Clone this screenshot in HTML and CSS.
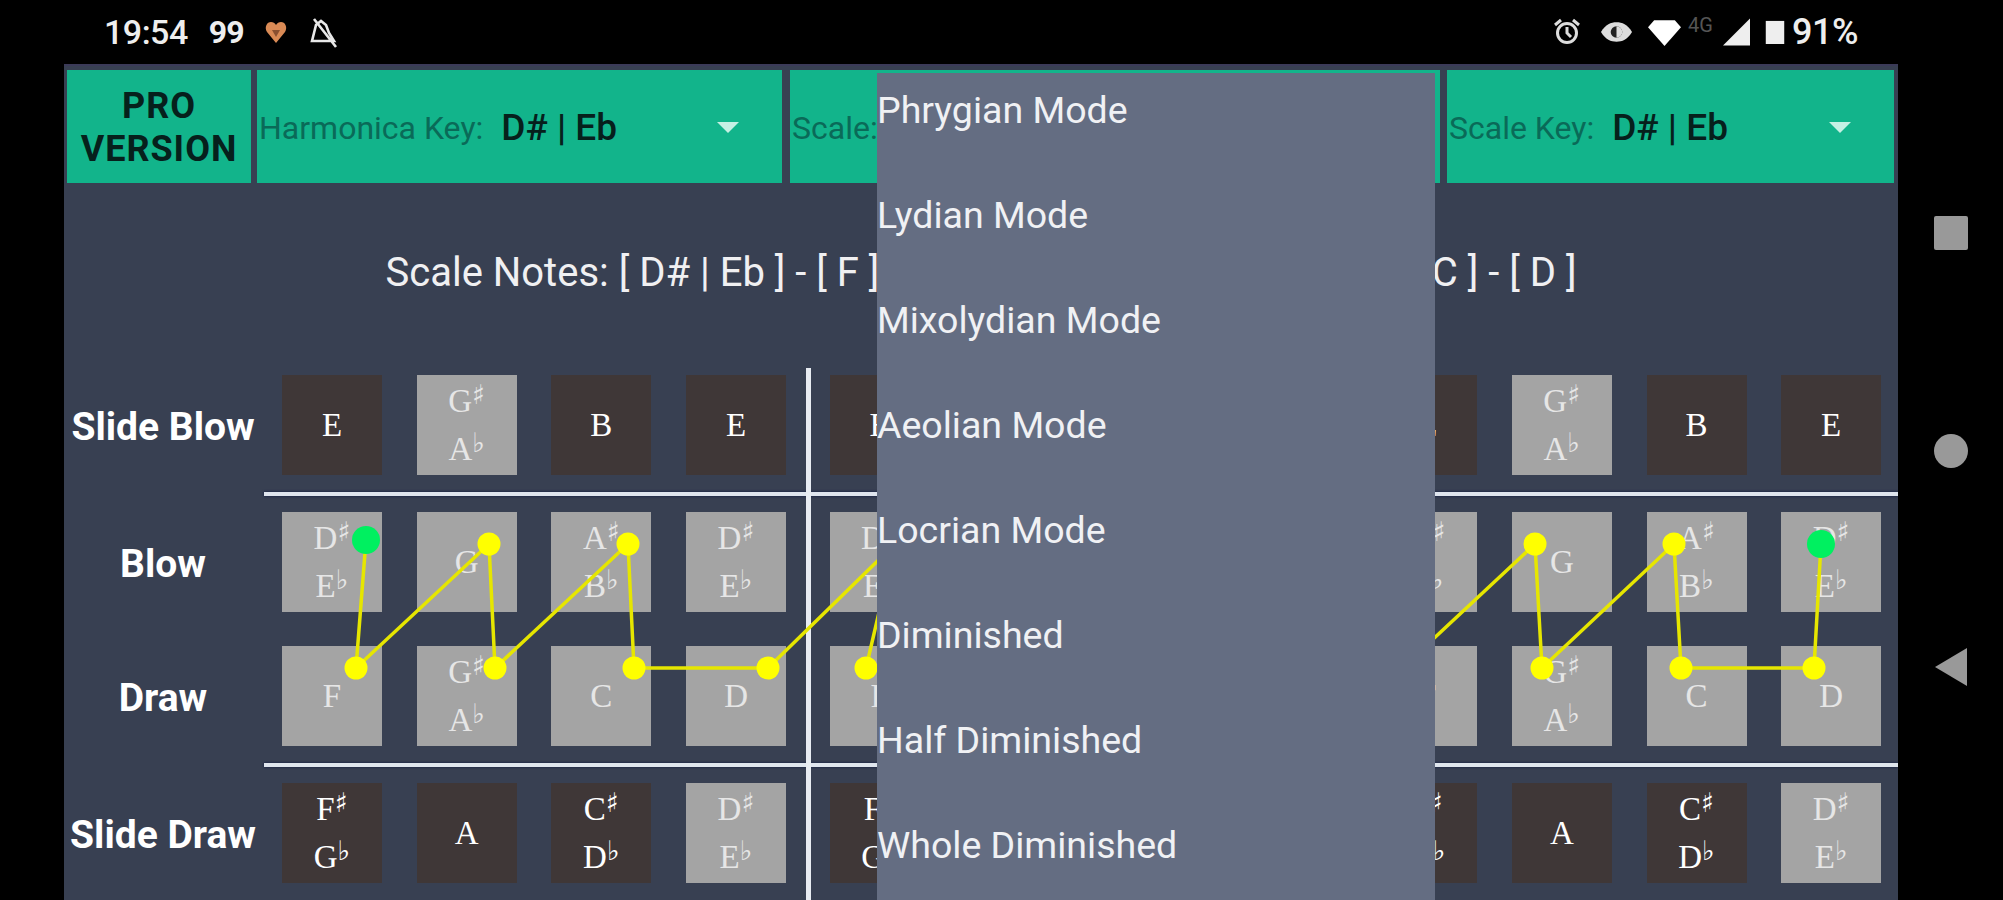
FILE: index.html
```html
<!DOCTYPE html>
<html lang="en">
<head>
    <meta charset="UTF-8">
    <title>Harmonica Scales</title>
    <link rel="stylesheet" href="styles.css">
</head>
<body>
    <div class="page">
        <div class="status-bar">
            <div class="status-left">
                <span class="clock">19:54</span>
                <span class="badge-99">99</span>
                <svg class="ic-heart" viewBox="0 0 24 24"><path d="M12 23 3 12C0 7 3 2 7 2c2 0 4 1 5 3 1-2 3-3 5-3 4 0 7 5 4 10z" fill="#d98a55"/><path d="M12 17 8 10h8z" fill="#8a5030"/></svg>
                <svg class="ic-mute" viewBox="0 0 33 32"><path d="M4 25h22l-5-8-3-8-5-4-5 4-2 8zM6 3l22 28" fill="none" stroke="#e8e8e8" stroke-width="2.6"/></svg>
            </div>
            <div class="status-right">
                <svg class="ic-alarm" viewBox="0 0 30 30"><circle cx="15" cy="16" r="9.5" fill="none" stroke="#ddd" stroke-width="3"/><path d="M15 10v6l4 4M3 8l6-5M27 8l-6-5" fill="none" stroke="#ddd" stroke-width="3"/></svg>
                <svg class="ic-eye" viewBox="0 0 34 24"><path d="M1 12C6 4 11 2 17 2s11 2 16 10c-5 8-10 10-16 10S6 20 1 12z" fill="#ddd"/><circle cx="17" cy="12" r="6" fill="#222"/><path d="M17 6a6 6 0 0 1 0 12z" fill="#ddd"/></svg>
                <svg class="ic-wifi" viewBox="0 0 32 26"><path d="M16 26 0 8 6 1h20l6 7z" fill="#fff"/></svg>
                <span class="net-type">4G</span>
                <svg class="ic-signal" viewBox="0 0 28 28"><path d="M28 0v28H0z" fill="#eee"/></svg>
                <svg class="ic-battery" viewBox="0 0 20 26"><rect x="0" y="1" width="20" height="25" fill="#eee"/></svg>
                <span class="battery-level">91%</span>
            </div>
        </div>

        <div class="main">
            <div class="app">
                <div class="toolbar">
                    <button class="pro-btn">PRO<br>VERSION</button>
                    <div class="picker picker-harp">
                        <span class="picker-label">Harmonica Key:</span>
                        <span class="picker-value">D# | Eb</span>
                        <span class="picker-arrow"></span>
                    </div>
                    <div class="picker picker-scale">
                        <span class="picker-label">Scale:</span>
                        <span class="picker-arrow"></span>
                    </div>
                    <div class="picker picker-key">
                        <span class="picker-label">Scale Key:</span>
                        <span class="picker-value">D# | Eb</span>
                        <span class="picker-arrow"></span>
                    </div>
                </div>

                <div class="scale-notes">Scale Notes: [ D# | Eb ] - [ F ] - [ G ] - [ G# | Ab ] - [ A# | Bb ] - [ C ] - [ D ]</div>

                <div class="board">
                    <div class="divider divider-a"></div>

                    <div class="row">
                        <div class="row-label">Slide Blow</div>
                        <div class="cells">
                            <div class="group">
                                <div class="cell dark">E</div>
                                <div class="cell on"><div>G<span class="acc">♯</span></div><div>A<span class="acc">♭</span></div></div>
                                <div class="cell dark">B</div>
                                <div class="cell dark">E</div>
                            </div>
                            <!-- the rest of this group sits under the open menu -->
                            <div class="group">
                                <div class="cell dark">E</div>
                                <div class="cell on"></div>
                                <div class="cell dark"></div>
                                <div class="cell dark"></div>
                            </div>
                            <div class="group">
                                <div class="cell dark">E</div>
                                <div class="cell on"><div>G<span class="acc">♯</span></div><div>A<span class="acc">♭</span></div></div>
                                <div class="cell dark">B</div>
                                <div class="cell dark">E</div>
                            </div>
                        </div>
                    </div>

                    <div class="rule"></div>

                    <div class="row row-blow">
                        <div class="row-label">Blow</div>
                        <div class="cells">
                            <div class="group">
                                <div class="cell on"><div>D<span class="acc">♯</span></div><div>E<span class="acc">♭</span></div></div>
                                <div class="cell on">G</div>
                                <div class="cell on"><div>A<span class="acc">♯</span></div><div>B<span class="acc">♭</span></div></div>
                                <div class="cell on"><div>D<span class="acc">♯</span></div><div>E<span class="acc">♭</span></div></div>
                            </div>
                            <div class="group">
                                <div class="cell on"><div>D<span class="acc">♯</span></div><div>E<span class="acc">♭</span></div></div>
                                <div class="cell on"></div>
                                <div class="cell on"></div>
                                <div class="cell on"></div>
                            </div>
                            <div class="group">
                                <div class="cell on"><div>D<span class="acc">♯</span></div><div>E<span class="acc">♭</span></div></div>
                                <div class="cell on">G</div>
                                <div class="cell on"><div>A<span class="acc">♯</span></div><div>B<span class="acc">♭</span></div></div>
                                <div class="cell on"><div>D<span class="acc">♯</span></div><div>E<span class="acc">♭</span></div></div>
                            </div>
                        </div>
                    </div>

                    <div class="row row-draw">
                        <div class="row-label">Draw</div>
                        <div class="cells">
                            <div class="group">
                                <div class="cell on">F</div>
                                <div class="cell on"><div>G<span class="acc">♯</span></div><div>A<span class="acc">♭</span></div></div>
                                <div class="cell on">C</div>
                                <div class="cell on">D</div>
                            </div>
                            <div class="group">
                                <div class="cell on">F</div>
                                <div class="cell on"></div>
                                <div class="cell on"></div>
                                <div class="cell on"></div>
                            </div>
                            <div class="group">
                                <div class="cell on">F</div>
                                <div class="cell on"><div>G<span class="acc">♯</span></div><div>A<span class="acc">♭</span></div></div>
                                <div class="cell on">C</div>
                                <div class="cell on">D</div>
                            </div>
                        </div>
                    </div>

                    <div class="rule"></div>

                    <div class="row">
                        <div class="row-label">Slide Draw</div>
                        <div class="cells">
                            <div class="group">
                                <div class="cell dark"><div>F<span class="acc">♯</span></div><div>G<span class="acc">♭</span></div></div>
                                <div class="cell dark">A</div>
                                <div class="cell dark"><div>C<span class="acc">♯</span></div><div>D<span class="acc">♭</span></div></div>
                                <div class="cell on"><div>D<span class="acc">♯</span></div><div>E<span class="acc">♭</span></div></div>
                            </div>
                            <div class="group">
                                <div class="cell dark"><div>F<span class="acc">♯</span></div><div>G<span class="acc">♭</span></div></div>
                                <div class="cell dark"></div>
                                <div class="cell dark"></div>
                                <div class="cell on"></div>
                            </div>
                            <div class="group">
                                <div class="cell dark"><div>F<span class="acc">♯</span></div><div>G<span class="acc">♭</span></div></div>
                                <div class="cell dark">A</div>
                                <div class="cell dark"><div>C<span class="acc">♯</span></div><div>D<span class="acc">♭</span></div></div>
                                <div class="cell on"><div>D<span class="acc">♯</span></div><div>E<span class="acc">♭</span></div></div>
                            </div>
                        </div>
                    </div>
                </div>
            </div>

            <div class="nav-bar">
                <div class="nav-square"></div>
                <div class="nav-circle"></div>
                <div class="nav-back"></div>
            </div>
        </div>

        <!-- scale path drawn over the cells, page coordinates -->
        <svg class="scale-path" viewBox="0 0 2003 900">
            <polyline points="366,540 356,668 489,544 495,668 628,544 634,668 768,668 895,544 866,668"/>
            <polyline points="1430,642 1535,544 1542,668 1674,544 1681,668 1814,668 1821,544"/>
            <circle cx="489" cy="544" r="11.5"/>
            <circle cx="628" cy="544" r="11.5"/>
            <circle cx="356" cy="668" r="11.5"/>
            <circle cx="495" cy="668" r="11.5"/>
            <circle cx="634" cy="668" r="11.5"/>
            <circle cx="768" cy="668" r="11.5"/>
            <circle cx="866" cy="668" r="11.5"/>
            <circle cx="1535" cy="544" r="11.5"/>
            <circle cx="1674" cy="544" r="11.5"/>
            <circle cx="1542" cy="668" r="11.5"/>
            <circle cx="1681" cy="668" r="11.5"/>
            <circle cx="1814" cy="668" r="11.5"/>
            <circle class="root" cx="366" cy="540" r="14"/>
            <circle class="root" cx="1821" cy="544" r="14"/>
        </svg>

        <div class="scale-menu">
            <div class="menu-item">Phrygian Mode</div>
            <div class="menu-item">Lydian Mode</div>
            <div class="menu-item">Mixolydian Mode</div>
            <div class="menu-item">Aeolian Mode</div>
            <div class="menu-item">Locrian Mode</div>
            <div class="menu-item">Diminished</div>
            <div class="menu-item">Half Diminished</div>
            <div class="menu-item">Whole Diminished</div>
        </div>
    </div>
</body>
</html>
```

FILE: styles.css
```css
body {
    margin: 0;
    background-color: #000;
    font-family: Roboto, "Liberation Sans", sans-serif;
    overflow: hidden;
}

.page {
    position: relative;
    width: 2003px;
    height: 900px;
    overflow: hidden;
}

/* status bar */
.status-bar {
    height: 64px;
    display: flex;
    justify-content: space-between;
    align-items: center;
    padding: 0 145px 0 104px;
    color: #eee;
}

.status-left,
.status-right {
    display: flex;
    align-items: center;
}

.clock {
    font-size: 34px;
    font-weight: 500;
    margin-right: 21px;
    letter-spacing: -.5px;
}

.badge-99 {
    font-size: 32px;
    font-weight: 700;
    margin-right: 21px;
    letter-spacing: -1px;
}

.ic-heart {
    width: 24px;
    height: 24px;
    margin-right: 20px;
}

.ic-mute {
    width: 33px;
    height: 32px;
}

.ic-alarm {
    width: 30px;
    height: 30px;
    margin-right: 18px;
}

.ic-eye {
    width: 33px;
    height: 26px;
    margin-right: 15px;
}

.ic-wifi {
    width: 33px;
    height: 27px;
    margin-right: 7px;
}

.net-type {
    width: 29px;
    font-size: 20px;
    color: #555;
    margin: -14px 6px 0 0;
}

.ic-signal {
    width: 27px;
    height: 28px;
    margin-right: 15px;
}

.ic-battery {
    width: 20px;
    height: 24px;
    margin-right: 7px;
}

.battery-level {
    font-size: 36px;
    font-weight: 500;
    letter-spacing: -.5px;
}

/* layout */
.main {
    display: flex;
    height: 836px;
    padding-left: 64px;
}

.app {
    width: 1834px;
    background-color: #384052;
    border-top: 2px solid #3b3a58;
    overflow: hidden;
}

.toolbar {
    display: flex;
    height: 113px;
    margin-top: 4px;
    padding-left: 3px;
}

.pro-btn {
    width: 184px;
    margin: 0 6px 0 0;
    padding: 2px 0 0;
    border: none;
    background-color: #12b48b;
    color: #06201c;
    font-family: inherit;
    font-size: 36px;
    font-weight: 700;
    line-height: 43px;
    letter-spacing: 1px;
}

.picker {
    display: flex;
    align-items: center;
    position: relative;
    background-color: #12b48b;
    padding: 2px 0 0 2px;
    margin-right: 7px;
}

.picker-harp {
    width: 523px;
    margin-right: 8px;
}

.picker-scale {
    width: 648px;
}

.picker-key {
    width: 445px;
    margin-right: 0;
}

.picker-label {
    font-size: 32px;
    color: #0a6a58;
    margin-right: 18px;
}

.picker-value {
    font-size: 37px;
    font-weight: 500;
    color: #06201c;
}

.picker-arrow {
    position: absolute;
    top: 52px;
    right: 43px;
    border-left: 11px solid transparent;
    border-right: 11px solid transparent;
    border-top: 11px solid #c6f0e4;
}

.scale-notes {
    height: 178px;
    padding-bottom: 7px;
    display: flex;
    align-items: center;
    justify-content: center;
    font-size: 40px;
    color: #f0f0f2;
    white-space: nowrap;
}

/* board */
.board {
    position: relative;
    padding-top: 7px;
    height: 525px;
}

.divider {
    position: absolute;
    top: 0;
    bottom: 0;
    width: 5px;
    background-color: #e8ecf2;
}

.divider-a {
    left: 742px;
}

.rule {
    height: 4px;
    margin: 17px 0 16px 200px;
    background-color: #dfe5ee;
    box-shadow: 0 0 3px #0a1540;
}

.row {
    display: flex;
    align-items: center;
}

.row-blow {
    margin-bottom: 34px;
}

.row-label {
    width: 198px;
    margin-right: 20px;
    padding-top: 3px;
    text-align: center;
    font-size: 39px;
    font-weight: 700;
    color: #fff;
    white-space: nowrap;
}

.cells {
    display: flex;
    gap: 43.5px;
}

.group {
    display: flex;
    gap: 34.7px;
}

.cell {
    width: 100px;
    height: 100px;
    display: flex;
    flex-direction: column;
    align-items: center;
    justify-content: center;
    font-family: "Liberation Serif", "Times New Roman", serif;
    font-size: 33px;
    line-height: 48px;
    color: #fff;
}

.cell.on {
    background-color: #a4a4a4;
    color: #e6e6e6;
}

.cell.dark {
    background-color: #3f3737;
}

.acc {
    font-family: "DejaVu Sans", sans-serif;
    font-size: 27px;
    line-height: 0;
    vertical-align: 8px;
}

/* scale path overlay */
.scale-path {
    position: absolute;
    left: 0;
    top: 0;
    width: 2003px;
    height: 900px;
    pointer-events: none;
}

.scale-path polyline {
    fill: none;
    stroke: #e6e600;
    stroke-width: 3.5;
}

.scale-path circle {
    fill: #ffff00;
}

.scale-path .root {
    fill: #00f060;
}

/* dropdown */
.scale-menu {
    position: absolute;
    left: 877px;
    top: 73px;
    bottom: 0;
    width: 558px;
    overflow: hidden;
    background-color: #646d82;
}

.menu-item {
    height: 105px;
    display: flex;
    align-items: center;
    font-size: 37.5px;
    color: #f0f1f4;
    position: relative;
    top: -16px;
}

/* nav buttons */
.nav-bar {
    flex: 1;
    display: flex;
    flex-direction: column;
    align-items: center;
}

.nav-square {
    width: 34px;
    height: 34px;
    margin-top: 152px;
    background-color: #999;
    border-radius: 2px;
}

.nav-circle {
    width: 34px;
    height: 34px;
    margin-top: 184px;
    background-color: #999;
    border-radius: 50%;
}

.nav-back {
    margin-top: 180px;
    border-top: 19px solid transparent;
    border-bottom: 19px solid transparent;
    border-right: 32px solid #999;
}
```
